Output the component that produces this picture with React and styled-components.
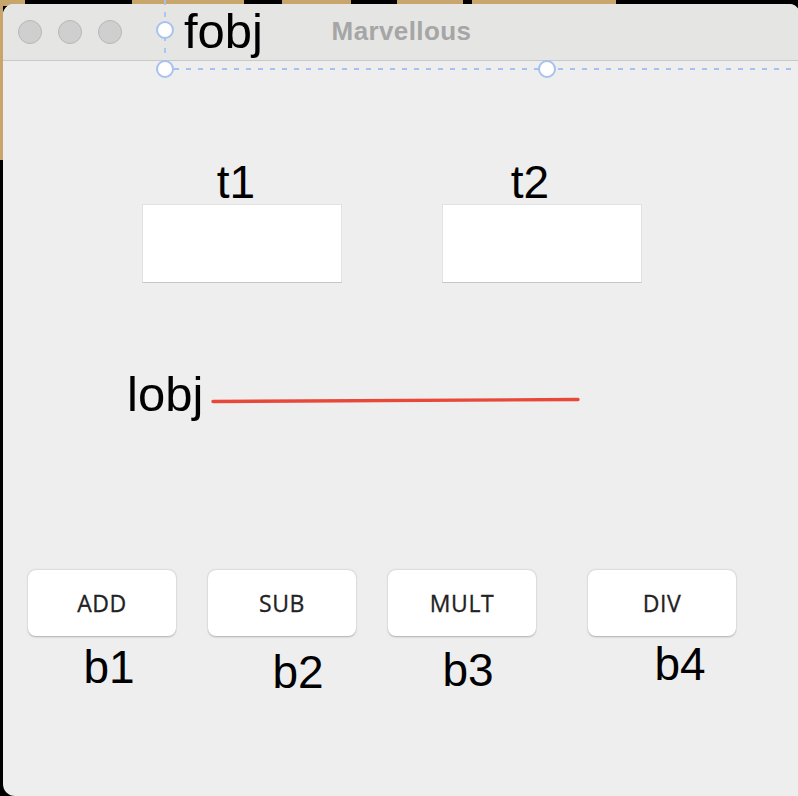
import React from "react";
import styled, { createGlobalStyle } from "styled-components";

const GlobalStyle = createGlobalStyle`
  html, body {
    margin: 0;
    padding: 0;
    background: #000;
  }
  body {
    font-family: "Liberation Sans", Arial, sans-serif;
  }
`;

const tan = "#c7a56b";

const Desktop = styled.div`
  position: relative;
  width: 798px;
  height: 796px;
  overflow: hidden;
  box-sizing: border-box;
  padding: 4px 0 0 3px;
  background-color: #000;
  background-image: linear-gradient(${tan}, ${tan}), linear-gradient(${tan}, ${tan}),
    linear-gradient(${tan}, ${tan}), linear-gradient(${tan}, ${tan}),
    linear-gradient(${tan}, ${tan}), linear-gradient(${tan}, ${tan});
  background-repeat: no-repeat;
  background-size: 25px 6px, 3px 160px, 112px 6px, 69px 6px, 66px 6px, 144px 6px;
  background-position: 0 0, 0 0, 132px 0, 282px 0, 397px 0, 472px 0;
`;

const Window = styled.div`
  width: 797px;
  height: 792px;
  display: flex;
  flex-direction: column;
  background: #eeeeee;
  border-radius: 11px 11px 0 12px;
  overflow: hidden;
`;

const TitleBar = styled.div`
  height: 56px;
  flex: none;
  display: grid;
  grid-template-columns: 1fr auto 1fr;
  align-items: center;
  background: #e5e5e4;
  border-bottom: 1px solid #c9c9c9;
`;

const Lights = styled.div`
  display: flex;
  gap: 16px;
  padding-left: 15px;
`;

const Light = styled.span`
  width: 22px;
  height: 22px;
  border-radius: 50%;
  background: #cfcfcf;
  border: 1px solid #b8b8b8;
`;

const Title = styled.div`
  font-size: 26px;
  font-weight: 700;
  letter-spacing: 0.4px;
  color: #a6a6a6;
  margin-top: -1px;
`;

const Canvas = styled.div`
  flex: 1;
  display: flex;
  flex-direction: column;
  padding-top: 99px;
`;

const BigLabel = styled.div`
  font-size: ${(p) => p.$size || 46}px;
  line-height: 44px;
  color: #000;
  white-space: nowrap;
`;

const FieldRow = styled.div`
  display: flex;
  gap: 100px;
  padding-left: 139px;
`;

const Field = styled.div`
  width: 200px;
  display: flex;
  flex-direction: column;
`;

const FieldLabel = styled(BigLabel)`
  text-align: center;
  padding-right: ${(p) => p.$shift * 2}px;
`;

const TextBox = styled.div`
  height: 77px;
  background: #fff;
  border: 1px solid #e2e2e2;
  border-bottom-color: #c6c6c6;
`;

const LineRow = styled.div`
  display: flex;
  align-items: flex-start;
  margin-top: 89px;
  padding-left: 124px;
`;

const LineArt = styled.svg`
  display: block;
  margin-left: 7px;
`;

const ButtonRow = styled.div`
  display: flex;
  gap: 32px;
  margin-top: 154px;
  padding-left: 25px;
`;

const ButtonCell = styled.div`
  width: 148px;
  display: flex;
  flex-direction: column;
  margin-left: ${(p) => p.$extra || 0}px;
`;

const Button = styled.button`
  height: 66px;
  border: none;
  border-radius: 8px;
  background: #fff;
  box-shadow: 0 0.5px 2px rgba(0, 0, 0, 0.28);
  font-family: "Open Sans", "Liberation Sans", sans-serif;
  font-weight: 400;
  font-size: 23px;
  letter-spacing: 0.6px;
  color: #222;
  padding: 0;
  -webkit-text-stroke: 0.3px #222;
`;

const Caption = styled(BigLabel)`
  text-align: center;
  margin-top: ${(p) => p.$dy}px;
  padding-left: ${(p) => p.$dx * 2}px;
`;

const Selection = styled.svg`
  position: absolute;
  left: 0;
  top: 0;
  pointer-events: none;
`;

const SelectedName = styled(BigLabel)`
  position: absolute;
  left: 184px;
  top: 9px;
`;

const fields = [
  { name: "t1", shift: 6 },
  { name: "t2", shift: 12 },
];

const buttons = [
  { text: "ADD", name: "b1", dx: 7, dy: 9 },
  { text: "SUB", name: "b2", dx: 16, dy: 14 },
  { text: "MULT", name: "b3", dx: 6, dy: 12 },
  { text: "DIV", name: "b4", dx: 18, dy: 6, extra: 20 },
];

const handle = "#a6c1f2";

export default function App() {
  return (
    <>
      <GlobalStyle />
      <Desktop>
        <Window>
          <TitleBar>
            <Lights>
              <Light />
              <Light />
              <Light />
            </Lights>
            <Title>Marvellous</Title>
            <div />
          </TitleBar>
          <Canvas>
            <FieldRow>
              {fields.map((f) => (
                <Field key={f.name}>
                  <FieldLabel $shift={f.shift}>{f.name}</FieldLabel>
                  <TextBox />
                </Field>
              ))}
            </FieldRow>
            <LineRow>
              <BigLabel $size={49}>lobj</BigLabel>
              <LineArt width="372" height="44" viewBox="0 0 372 44">
                <line
                  x1="3"
                  y1="29.5"
                  x2="368"
                  y2="27.5"
                  stroke="#e8483a"
                  strokeWidth="3.4"
                  strokeLinecap="round"
                />
              </LineArt>
            </LineRow>
            <ButtonRow>
              {buttons.map((b) => (
                <ButtonCell key={b.name} $extra={b.extra}>
                  <Button>{b.text}</Button>
                  <Caption $dx={b.dx} $dy={b.dy}>
                    {b.name}
                  </Caption>
                </ButtonCell>
              ))}
            </ButtonRow>
          </Canvas>
        </Window>
        <Selection width="798" height="80" viewBox="0 0 798 80">
          <line x1="165" y1="0" x2="165" y2="69" stroke={handle} strokeWidth="1.8" strokeDasharray="5 7" />
          <line x1="174" y1="69" x2="798" y2="69" stroke={handle} strokeWidth="1.8" strokeDasharray="5 7" />
          <circle cx="165" cy="30" r="8" fill="#fff" stroke={handle} strokeWidth="2" />
          <circle cx="165" cy="69" r="8" fill="#fff" stroke={handle} strokeWidth="2" />
          <circle cx="547" cy="69" r="8" fill="#fff" stroke={handle} strokeWidth="2" />
        </Selection>
        <SelectedName $size={49}>fobj</SelectedName>
      </Desktop>
    </>
  );
}
